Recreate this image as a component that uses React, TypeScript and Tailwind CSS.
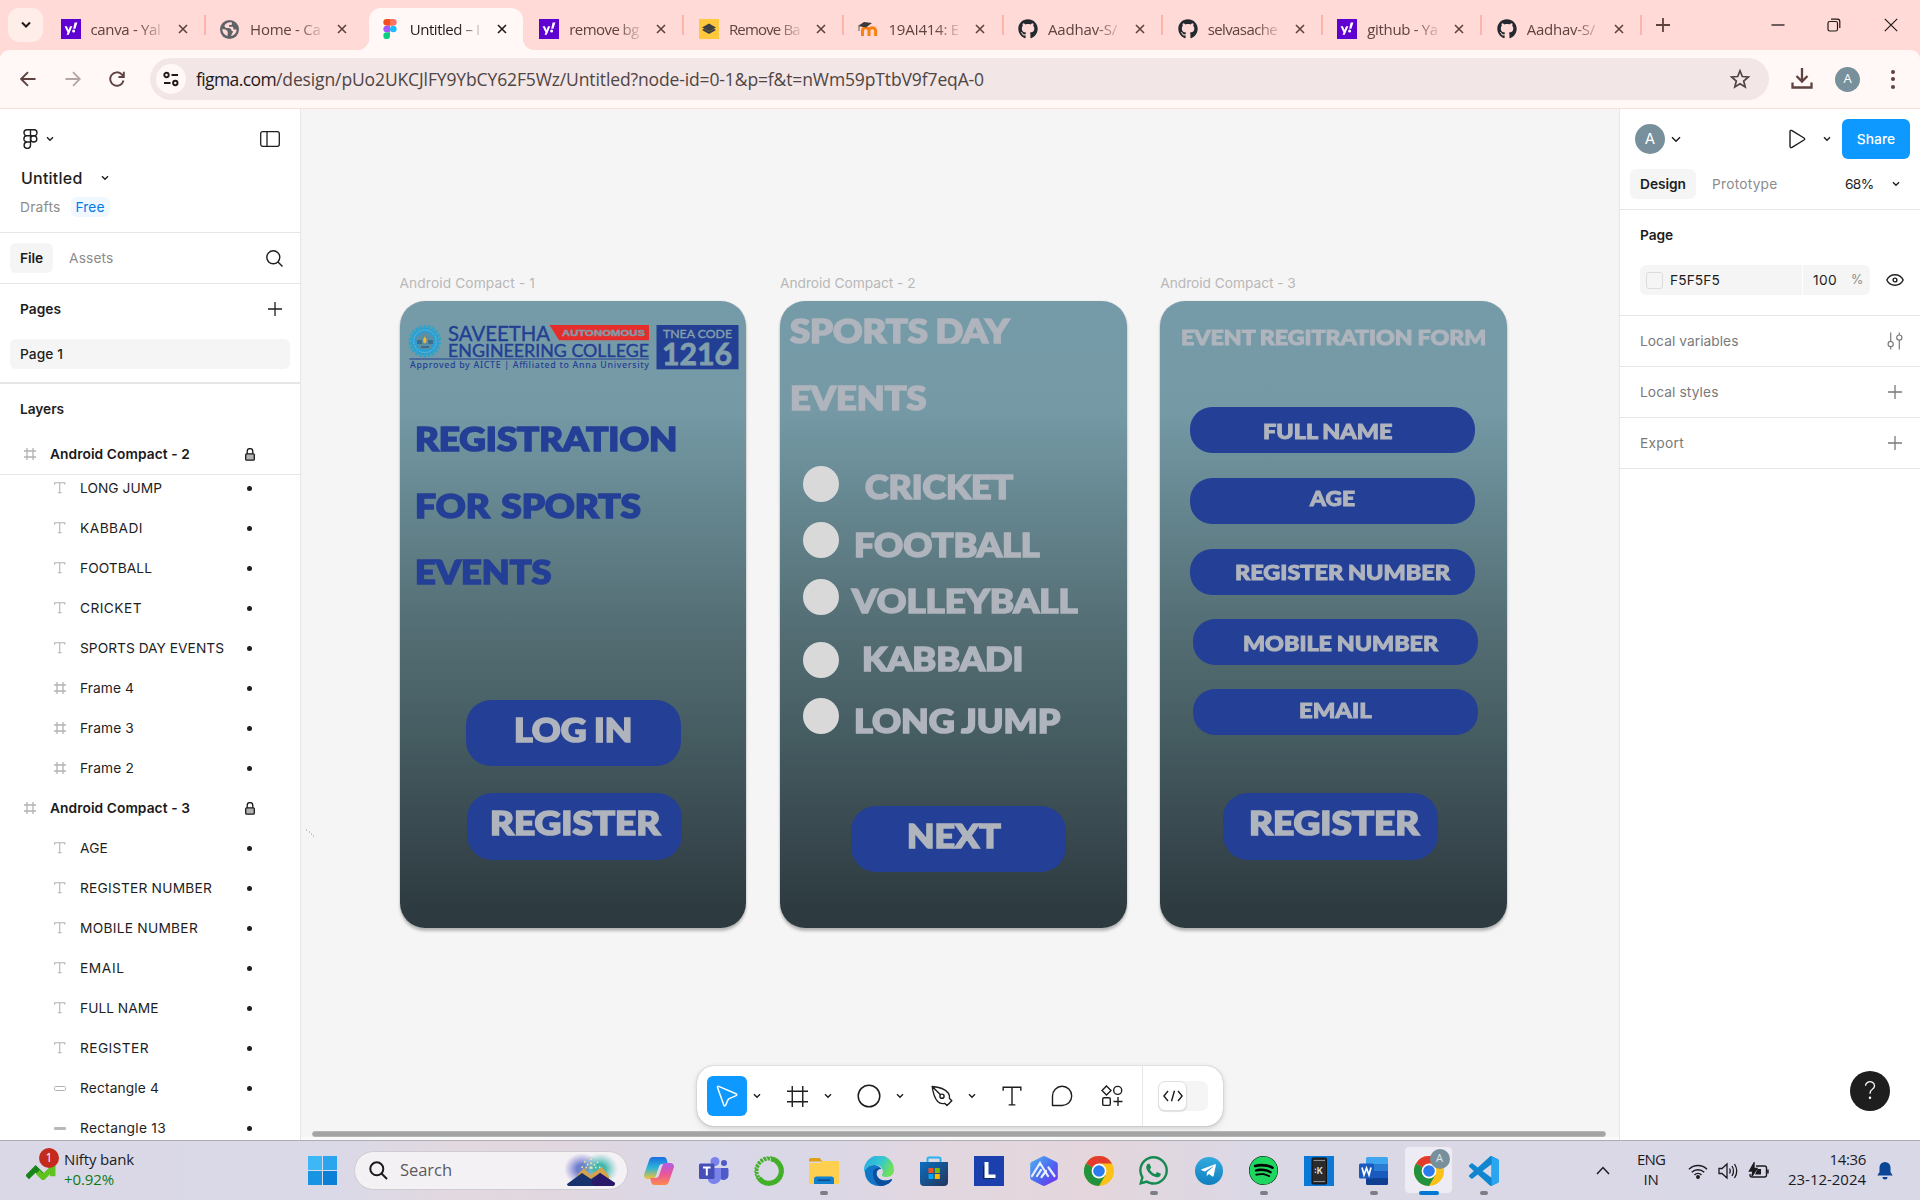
import React, { useLayoutEffect, useRef, useState } from "react";
import { FaGithub, FaSpotify, FaTelegramPlane, FaWhatsapp } from "react-icons/fa";

/* Text that is stretched or tightened to an exact width. */
function Fit({ w, mode = "space", children }: { w: number; mode?: "space" | "scale"; children: string }) {
  const ref = useRef<HTMLSpanElement>(null);
  const [style, setStyle] = useState<React.CSSProperties>({});
  useLayoutEffect(() => {
    const natural = ref.current!.getBoundingClientRect().width;
    if (!natural) return;
    if (mode === "scale") setStyle({ transform: `scaleX(${w / natural})` });
    else setStyle({ letterSpacing: `${(w - natural) / children.length}px` });
  }, [w, mode, children]);
  return (
    <span ref={ref} className="inline-block origin-left whitespace-pre" style={style}>
      {children}
    </span>
  );
}

type IconProps = { w: number; h?: number; sw?: number; className?: string; box?: string; children: React.ReactNode };
const Ic = ({ w, h = w, sw = 1.3, className = "", box, children }: IconProps) => (
  <svg width={w} height={h} viewBox={box ?? `0 0 ${w} ${h}`} fill="none" stroke="currentColor" strokeWidth={sw} className={`shrink-0 ${className}`}>
    {children}
  </svg>
);

const Chev = ({ className = "" }: { className?: string }) => (
  <Ic w={8} h={6} sw={1.4} className={className}>
    <path d="M1 1.2 4 4.2 7 1.2" />
  </Ic>
);
const Hash = ({ s = 12, sw = 1.3, className = "" }: { s?: number; sw?: number; className?: string }) => (
  <Ic w={s} sw={sw} box="0 0 12 12" className={className}>
    <path d="M3 0v12M9 0v12M0 3h12M0 9h12" />
  </Ic>
);
const TIcon = ({ s = 12, sw = 1.1, className = "" }: { s?: number; sw?: number; className?: string }) => (
  <Ic w={s} sw={sw} box="0 0 12 12" className={className}>
    <path d="M.7 2.8V.7h10.6v2.1M6 .7v10.6M4 11.3h4" />
  </Ic>
);
const Plus = ({ className = "" }: { className?: string }) => (
  <Ic w={14} sw={1.3} className={className}>
    <path d="M7 0v14M0 7h14" />
  </Ic>
);

/* ---------- browser chrome ---------- */

const Yahoo = () => (
  <svg width="20" height="20" viewBox="0 0 20 20">
    <rect width="20" height="20" fill="#5f01d1" />
    <path d="M3.6 7.3h2.3l1.6 3.6 1.5-3.6h2.3L7.8 15.8H5.5l1-2.3z" fill="#fff" />
    <path d="M13.6 3.6h2.8l-2 6.2h-2.2z" fill="#fff" />
    <circle cx="12.6" cy="12" r="1.5" fill="#fff" />
  </svg>
);
const Globe = () => (
  <svg width="19" height="19" viewBox="0 0 20 20">
    <circle cx="10" cy="10" r="10" fill="#5f6368" />
    <path d="M12.500 2.500c-3-.8-6 .5-7.500 2.800-.8 1.500.2 2.800 1.800 3 1.500.2 3-.2 4.200.7 1 .8.6 2 1.800 2.500 1 .4 1.200 1.300.3 2-.9.8-.6 2.300-1.600 3.300 3.500-.5 6-3.300 6-6.800h-2.300c-.9 0-1.200-.8-1.200-1.700s-.8-1.300-1.800-1.300H9.500V5.300h1.600c1 0 1.500-.5 1.500-1.300z" fill="#ffdad6" />
    <path d="M2.500 9.500c2 .2 4.500.5 5.500 2.500.5 1.300 0 2.500 0 4.800-3.300-.8-5.700-3.800-5.500-7.300z" fill="#ffdad6" />
  </svg>
);
const FigmaLogo = () => (
  <svg width="14" height="20" viewBox="0 0 12 18">
    <path d="M3 0h3v6H3a3 3 0 0 1 0-6z" fill="#f24e1e" />
    <path d="M6 0h3a3 3 0 0 1 0 6H6z" fill="#ff7262" />
    <path d="M3 6h3v6H3a3 3 0 0 1 0-6z" fill="#a259ff" />
    <circle cx="9" cy="9" r="3" fill="#1abcfe" />
    <path d="M3 12h3v3a3 3 0 1 1-3-3z" fill="#0acf83" />
  </svg>
);
const Layers = () => (
  <svg width="20" height="20" viewBox="0 0 20 20">
    <rect width="20" height="20" fill="#ffc83d" />
    <path d="M10 4.500l7 4-7 4-7-4z" fill="#3c4043" />
    <path d="M3 11l7 4 7-4-2.200-1.200L10 12.500 5.200 9.800z" fill="#3c4043" />
  </svg>
);
const Moodle = () => (
  <svg width="20" height="20" viewBox="0 0 20 20">
    <path d="M4.500 17V11.500a3.300 3.300 0 0 1 6.500 0V17M11 12a3.300 3.300 0 0 1 6.600 0v5" fill="none" stroke="#f98012" strokeWidth="3" />
    <path d="M0 7l6-4 8 1-6 4.500z" fill="#3b3b3b" />
    <path d="M1 7v5" stroke="#3b3b3b" strokeWidth="0.800" />
  </svg>
);
const Git = () => <FaGithub size={20} color="#24292f" />;

const tabs = [
  { icon: <Yahoo />, title: "canva - Yal", w: 70 },
  { icon: <Globe />, title: "Home - Ca", w: 70.500 },
  { icon: <FigmaLogo />, title: "Untitled – I", w: 70, active: true },
  { icon: <Yahoo />, title: "remove bg", w: 69.500 },
  { icon: <Layers />, title: "Remove Ba", w: 71 },
  { icon: <Moodle />, title: "19AI414: E", w: 70.500 },
  { icon: <Git />, title: "Aadhav-S/", w: 69 },
  { icon: <Git />, title: "selvasache", w: 69.500 },
  { icon: <Yahoo />, title: "github - Ya", w: 70.500 },
  { icon: <Git />, title: "Aadhav-S/", w: 68 },
];

function Tab({ icon, title, w, active, sep }: { icon: React.ReactNode; title: string; w: number; active?: boolean; sep: boolean }) {
  return (
    <div className={`relative flex h-[42px] w-[159.6px] items-center ${active ? "" : "text-[#5d423f]"}`}>
      {active && (
        <div className="absolute inset-y-0 left-[3px] right-[3px] rounded-t-[12px] bg-[#fff8f7]">
          <div className="absolute bottom-0 -left-3 size-3 bg-[radial-gradient(circle_at_0_0,transparent_12px,#fff8f7_12.5px)]" />
          <div className="absolute bottom-0 -right-3 size-3 bg-[radial-gradient(circle_at_100%_0,transparent_12px,#fff8f7_12.5px)]" />
        </div>
      )}
      <div className="relative flex w-full items-center pl-[13.500px]">
        <span className={`flex w-5 ${active ? "justify-center" : ""}`}>{icon}</span>
        <span className="ml-[10px] w-[72px] text-[15px] leading-5 [mask-image:linear-gradient(to_right,black_66%,transparent_105%)]">
          <Fit w={w}>{title}</Fit>
        </span>
        <Ic w={10} sw={1.6} className="ml-[15px]">
          <path d="M1 1 9 9M9 1 1 9" />
        </Ic>
      </div>
      {sep && <div className="absolute right-px top-[7px] h-5 w-[2px] bg-[#ffb4ab]" />}
    </div>
  );
}

function Browser() {
  return (
    <header className="h-[108px] shrink-0 bg-[#ffdad6] font-['Open_Sans','Noto_Sans',sans-serif]">
      <div className="flex h-[50px] items-start pt-2 pl-2 text-[#1f1a19]">
        <div className="flex h-[34px] w-[35px] items-center justify-center rounded-[11px] bg-[#ffedea]">
          <Ic w={10} h={8} sw={2}>
            <path d="M1 1.500 5 5.500 9 1.500" />
          </Ic>
        </div>
        <div className="ml-[4px] flex">
          {tabs.map((t, i) => (
            <Tab key={i} {...t} sep={i !== 1 && i !== 2} />
          ))}
        </div>
        <Ic w={14} sw={1.800} className="mt-[10px] ml-[13px] text-[#5d423f]">
          <path d="M7 0v14M0 7h14" />
        </Ic>
        <Ic w={14} sw={1.300} className="mt-[10px] ml-[101px]">
          <path d="M0.500 7h13" />
        </Ic>
        <Ic w={14} sw={1.200} className="mt-[10px] ml-[42px]">
          <rect x="1" y="3.500" width="9.500" height="9.500" rx="1.800" />
          <path d="M4 1.200h6.500a2.300 2.300 0 0 1 2.300 2.300V10" />
        </Ic>
        <Ic w={14} sw={1.200} className="mt-[10px] ml-[43px]">
          <path d="M.8.8 13.200 13.200M13.200.8.8 13.200" />
        </Ic>
      </div>
      <div className="flex h-[58px] items-center rounded-t-[9px] bg-[#fff8f7] pl-5 text-[#5d423f]">
        <Ic w={16} sw={1.900}>
          <path d="M15.500 8H1.500M8 1.200 1.200 8 8 14.800" />
        </Ic>
        <Ic w={16} sw={1.800} className="ml-[29px] text-[#b5a5a3]">
          <path d="M.5 8h14M8 1.200 14.800 8 8 14.800" />
        </Ic>
        <Ic w={16} sw={1.900} className="ml-[28px]">
          <path d="M14.500 9.500A6.700 6.700 0 1 1 13 3.600L14.500 5.500M14.800.8V6H9.500" />
        </Ic>
        <div className="ml-[25px] flex h-[42px] w-[1619px] items-center rounded-full bg-[#f2e6e7] pl-[6px] pr-[19px] text-[#4f4543]">
          <div className="flex size-[30px] items-center justify-center rounded-full bg-[#fff8f7] text-[#1f1a19]">
            <Ic w={16} sw={1.900}>
              <circle cx="3.500" cy="4" r="2.200" />
              <path d="M8.500 4H15M1 12h6.500" />
              <circle cx="12.300" cy="12" r="2.200" />
            </Ic>
          </div>
          <div className="ml-[10px] flex text-[17.500px] leading-6">
            <span className="text-[#1f1a19]">
              <Fit w={80}>figma.com</Fit>
            </span>
            <Fit w={708}>/design/pUo2UKCJlFY9YbCY62F5Wz/Untitled?node-id=0-1&p=f&t=nWm59pTtbV9f7eqA-0</Fit>
          </div>
          <Ic w={20} sw={1.700} className="ml-auto">
            <path d="M10 1.800 12.300 7.500 18.400 8 13.700 12 15.200 18 10 14.700 4.800 18 6.300 12 1.600 8 7.700 7.500Z" />
          </Ic>
        </div>
        <Ic w={22} sw={2.300} className="ml-[22px]">
          <path d="M11 0v13M5.500 8 11 13.500 16.500 8M1.500 14.500v5h19v-5" />
        </Ic>
        <div className="ml-[22px] flex size-[25px] items-center justify-center rounded-full bg-[#78909c] text-[13px] text-white">A</div>
        <div className="ml-[31px] flex flex-col gap-[3.500px]">
          <i className="size-1 rounded-full bg-current" />
          <i className="size-1 rounded-full bg-current" />
          <i className="size-1 rounded-full bg-current" />
        </div>
      </div>
    </header>
  );
}

/* ---------- left panel ---------- */

type Layer = { kind: "T" | "F" | "R" | "L"; name: string; w: number };
const board2: Layer[] = [
  { kind: "T", name: "LONG JUMP", w: 82 },
  { kind: "T", name: "KABBADI", w: 63 },
  { kind: "T", name: "FOOTBALL", w: 72 },
  { kind: "T", name: "CRICKET", w: 62 },
  { kind: "T", name: "SPORTS DAY EVENTS", w: 144 },
  { kind: "F", name: "Frame 4", w: 54 },
  { kind: "F", name: "Frame 3", w: 54 },
  { kind: "F", name: "Frame 2", w: 54 },
];
const board3: Layer[] = [
  { kind: "T", name: "AGE", w: 28 },
  { kind: "T", name: "REGISTER NUMBER", w: 132 },
  { kind: "T", name: "MOBILE NUMBER", w: 118 },
  { kind: "T", name: "EMAIL", w: 44.500 },
  { kind: "T", name: "FULL NAME", w: 78.500 },
  { kind: "T", name: "REGISTER", w: 69 },
  { kind: "R", name: "Rectangle 4", w: 79 },
  { kind: "L", name: "Rectangle 13", w: 86 },
];

function LayerRow({ kind, name, w }: Layer) {
  return (
    <div className="flex h-10 shrink-0 items-center pl-[54px]">
      <span className="flex w-[26px] text-[#b3b3b3]">
        {kind === "T" && <TIcon s={11.500} />}
        {kind === "F" && <Hash />}
        {kind === "R" && <i className="mt-px h-[5px] w-3 rounded-[1.500px] border border-[#b3b3b3]" />}
        {kind === "L" && <i className="mt-px h-[3px] w-3 rounded-[1px] bg-[#b9b9b9]" />}
      </span>
      <span className="w-[167px]">
        <Fit w={w}>{name}</Fit>
      </span>
      <i className="size-[5px] rounded-full bg-[#1e1e1e]" />
    </div>
  );
}

const BoardRow = ({ name }: { name: string }) => (
  <div className="flex h-10 shrink-0 items-center pl-6 font-semibold text-[#1a1a1a]">
    <Hash className="text-[#b3b3b3]" />
    <span className="ml-[14px] w-[195px]">
      <Fit w={140}>{name}</Fit>
    </span>
    <Ic w={10} h={13} sw={1.300}>
      <path d="M2.200 6V3.400a2.800 2.800 0 0 1 5.600 0V6" />
      <rect x=".7" y="5.800" width="8.600" height="6.400" rx="1" fill="#b3b3b3" />
    </Ic>
  </div>
);

function LeftPanel() {
  return (
    <aside className="flex w-[301px] shrink-0 flex-col overflow-hidden border-r border-[#e6e6e6] bg-white text-[13.750px] text-[#1e1e1e]">
      <div className="flex h-[124px] shrink-0 flex-col border-b border-[#e6e6e6]">
        <div className="mt-[19px] flex h-[22px] items-center pl-[23px]">
          <Ic w={15} h={20.500} sw={1.400} box="0 0 15 20.500">
            <path d="M7.500.8H4a3 3 0 0 0 0 6h3.500zM7.500.8H11a3 3 0 0 1 0 6H7.500zM7.500 6.800H4a3 3 0 0 0 0 6.200h3.500zM7.500 13H4.200a3.200 3.200 0 1 0 3.300 3.300z" />
            <circle cx="10.700" cy="9.900" r="3.100" />
          </Ic>
          <Chev className="ml-2" />
          <Ic w={20} h={16} sw={1.300} className="ml-[206px]">
            <rect x=".7" y=".7" width="18.600" height="14.600" rx="2" />
            <path d="M7 .7v14.600" />
          </Ic>
        </div>
        <div className="mt-[17px] flex h-[22px] items-center pl-[21px] text-[16px] font-medium">
          <Fit w={61.500}>Untitled</Fit>
          <Chev className="ml-[18px]" />
        </div>
        <div className="mt-[8px] flex items-center pl-5 text-[#8c8c8c]">
          <Fit w={40.500}>Drafts</Fit>
          <span className="ml-[10px] flex h-5 items-center rounded-[6px] bg-[#f0f8ff] px-[5px] text-[#007be5]">
            <Fit w={29}>Free</Fit>
          </span>
        </div>
      </div>
      <div className="flex h-[51px] shrink-0 items-center border-b border-[#e6e6e6] pl-[10px]">
        <span className="flex h-[30px] w-[43px] items-center justify-center rounded-[6px] bg-[#f5f5f5] font-semibold">
          <Fit w={23}>File</Fit>
        </span>
        <span className="ml-4 w-[180px] text-[#8c8c8c]">
          <Fit w={44.500}>Assets</Fit>
        </span>
        <Ic w={17} sw={1.400} className="ml-[17px]">
          <circle cx="7.300" cy="7.300" r="6.500" />
          <path d="m12 12 4.500 4.500" />
        </Ic>
      </div>
      <div className="flex h-[100px] shrink-0 flex-col border-b-2 border-[#e6e6e6] px-[10px] font-semibold">
        <div className="mt-[15px] flex h-5 items-center pl-[10px]">
          <span className="w-[247.500px]">
            <Fit w={41}>Pages</Fit>
          </span>
          <Plus />
        </div>
        <div className="mt-5 flex h-[30px] w-[280px] shrink-0 items-center rounded-[6px] bg-[#f5f5f5] pl-[10px] font-medium">
          <Fit w={43}>Page 1</Fit>
        </div>
      </div>
      <div className="mt-[15px] flex h-5 shrink-0 items-center pl-5 font-semibold">
        <Fit w={44}>Layers</Fit>
      </div>
      <div className="mt-[15px] border-b border-[#e6e6e6]">
        <BoardRow name="Android Compact - 2" />
      </div>
      <div className="-mt-[7px] flex flex-col">
        {board2.map((l) => (
          <LayerRow key={l.name} {...l} />
        ))}
        <BoardRow name="Android Compact - 3" />
        {board3.map((l) => (
          <LayerRow key={l.name} {...l} />
        ))}
      </div>
    </aside>
  );
}

/* ---------- canvas ---------- */

type Box = { x: number; y: number; w: number; h: number; r: number };
type Label = { t: string; x: number; y: number; w: number; small?: boolean; blue?: boolean };
type Board = { name: string; x: number; boxes: Box[]; circles: number[]; labels: Label[] };

/* Coordinates are relative to the top-left corner of each board; a label's x, y and w describe its inked capitals. */
const boards: Board[] = [
  {
    name: "Android Compact - 1",
    x: 98.500,
    boxes: [
      { x: 66.300, y: 398.500, w: 215, h: 66, r: 25 },
      { x: 67.300, y: 492.200, w: 215, h: 66.300, r: 25 },
    ],
    circles: [],
    labels: [
      { t: "REGISTRATION", x: 17, y: 126, w: 259, blue: true },
      { t: "FOR  SPORTS", x: 17, y: 192.500, w: 223.500, blue: true },
      { t: "EVENTS", x: 17, y: 258.500, w: 134, blue: true },
      { t: "LOG IN", x: 115.800, y: 417, w: 115 },
      { t: "REGISTER", x: 91.800, y: 509.700, w: 168.500 },
    ],
  },
  {
    name: "Android Compact - 2",
    x: 479,
    boxes: [{ x: 71, y: 504.700, w: 214.700, h: 66, r: 25 }],
    circles: [164.800, 221, 278.100, 341, 397],
    labels: [
      { t: "SPORTS DAY", x: 10.700, y: 18, w: 218.500 },
      { t: "EVENTS", x: 11.300, y: 84.500, w: 134 },
      { t: "CRICKET", x: 86, y: 174, w: 147.300 },
      { t: "FOOTBALL", x: 75.300, y: 231.300, w: 184 },
      { t: "VOLLEYBALL", x: 72, y: 287.700, w: 225.500 },
      { t: "KABBADI", x: 84, y: 345.700, w: 158 },
      { t: "LONG JUMP", x: 75.300, y: 408, w: 204.500 },
      { t: "NEXT", x: 128.700, y: 522.700, w: 92 },
    ],
  },
  {
    name: "Android Compact - 3",
    x: 859.300,
    boxes: [
      { x: 29.700, y: 106, w: 285, h: 46, r: 22 },
      { x: 29.700, y: 176.900, w: 285, h: 46, r: 22 },
      { x: 29.700, y: 247.300, w: 285, h: 46, r: 22 },
      { x: 32.300, y: 318, w: 285, h: 46, r: 22 },
      { x: 32.300, y: 387.400, w: 285, h: 46, r: 22 },
      { x: 63, y: 492, w: 214.700, h: 66.300, r: 25 },
    ],
    circles: [],
    labels: [
      { t: "EVENT REGITRATION FORM", x: 21.600, y: 27.800, w: 303, small: true },
      { t: "FULL NAME", x: 103.600, y: 122.200, w: 128, small: true },
      { t: "AGE", x: 149.700, y: 189, w: 44.500, small: true },
      { t: "REGISTER NUMBER", x: 75.300, y: 263, w: 214, small: true },
      { t: "MOBILE NUMBER", x: 84, y: 334.200, w: 194, small: true },
      { t: "EMAIL", x: 139.300, y: 400.600, w: 71.500, small: true },
      { t: "REGISTER", x: 90.700, y: 509.700, w: 168.500 },
    ],
  },
];

/* Side bearings of the display face, in em. */
const leftBearing = (t: string) => (/^[VA]/.test(t) ? 0 : /^[CSG]/.test(t) ? 0.02 : 0.05);
const rightBearing = (t: string) => (/[NIMD]$/.test(t) ? 0.055 : /[ES]$/.test(t) ? 0.02 : 0);

const teeth = Array.from({ length: 22 }, (_, i) => i * (360 / 22));

const CollegeLogo = () => (
  <svg width="331" height="46" viewBox="0 0 331 46" className="absolute left-[8px] top-[22.500px]">
    {teeth.map((a) => (
      <rect key={a} x="15.400" y="1" width="3" height="4" fill="#2fa3c9" transform={`rotate(${a} 16.900 17.300)`} />
    ))}
    <circle cx="16.900" cy="17.300" r="13.400" fill="#2a9fd6" />
    <circle cx="16.900" cy="17.300" r="11.300" fill="none" stroke="#7fc0c8" strokeWidth="1" strokeDasharray="1.500 1" />
    <path d="M7.500 14 16.900 7l9.400 7-3.500 11H11z" fill="#5b8fa3" />
    <path d="M9 16h5v4H9zM20 16h5v4h-5zM13 22h8v2h-8z" fill="#3d6c8e" />
    <path d="M16.900 12.500c2.500 3 1.900 6.500 0 6.800-2-.3-2.600-3.800 0-6.800z" fill="#f2b632" />
    <g fill="#223f93" fontFamily="Lato, sans-serif" fontWeight="400">
      <text x="40" y="16.900" fontSize="21.500" textLength="102" lengthAdjust="spacingAndGlyphs" stroke="#223f93" strokeWidth="0.400">SAVEETHA</text>
      <text x="40" y="32.500" fontSize="17.600" textLength="201" lengthAdjust="spacingAndGlyphs" stroke="#223f93" strokeWidth="0.400">ENGINEERING COLLEGE</text>
      <rect x="1.500" y="34.500" width="239.500" height="1" />
    </g>
    <text x="2" y="44" fontSize="8.800" fontFamily="'Noto Sans', sans-serif" fontWeight="500" fill="#223f93" textLength="239" lengthAdjust="spacing">Approved by AICTE | Affiliated to Anna University</text>
    <path d="M141.500 1H241v15.300h-90z" fill="#e52e2c" />
    <text x="154" y="12" fontSize="9.800" fontFamily="'Liberation Sans', sans-serif" fontWeight="700" fill="#839aa6" stroke="#839aa6" strokeWidth="0.500" textLength="83" lengthAdjust="spacingAndGlyphs">AUTONOMOUS</text>
    <rect x="248.500" y="1" width="82" height="44.300" fill="#223f93" />
    <g fill="#829fac" fontFamily="Lato, sans-serif">
      <text x="255" y="13.600" fontSize="11.300" fontWeight="400" textLength="69" lengthAdjust="spacingAndGlyphs" stroke="#829fac" strokeWidth="0.400">TNEA CODE</text>
      <text x="254" y="40.600" fontSize="31" fontWeight="700" stroke="#829fac" strokeWidth="0.900" textLength="70" lengthAdjust="spacingAndGlyphs">1216</text>
    </g>
  </svg>
);

function BoardLabel({ label: l }: { label: Label }) {
  const size = l.small ? 21 : 33;
  const left = leftBearing(l.t) * size;
  const right = rightBearing(l.t) * size;
  return (
    <div
      className={`absolute leading-none ${l.small ? "text-[21px] [-webkit-text-stroke:1px_currentColor]" : "text-[33px] [-webkit-text-stroke:1.700px_currentColor]"} ${l.blue ? "text-[#243f96] [word-spacing:-0.08em]" : "text-[#afb4bd] [word-spacing:-0.03em]"}`}
      style={{ left: l.x - left, top: l.y - size * 0.15 }}
    >
      <Fit w={l.w + left + right} mode="scale">
        {l.t}
      </Fit>
    </div>
  );
}

function Artboard({ board }: { board: Board }) {
  return (
    <div className="absolute top-[166px] w-[347px]" style={{ left: board.x }}>
      <div className="h-[26.300px] text-[13.750px] leading-[17px] text-[#b8b8b8]">
        <Fit w={135.500}>{board.name}</Fit>
      </div>
      <div className="relative h-[627px] w-[346.500px] rounded-[25px] bg-[linear-gradient(180deg,#769ba8_0%,#759aa6_17%,#65868f_33%,#567077_50%,#475f64_67%,#3a4b51_83%,#2d3b40_97%)] shadow-[0_3px_3px_rgba(0,0,0,0.25),0_0_1px_rgba(0,0,0,0.3)] font-['Lato',sans-serif] font-black">
        {board.name.endsWith("1") && <CollegeLogo />}
        {board.boxes.map((b, i) => (
          <div key={i} className="absolute bg-[#243f96]" style={{ left: b.x, top: b.y, width: b.w, height: b.h, borderRadius: b.r }} />
        ))}
        {board.circles.map((y) => (
          <div key={y} className="absolute left-[23.200px] size-[35.500px] rounded-full bg-[#d9d9d9]" style={{ top: y }} />
        ))}
        {board.labels.map((l) => (
          <BoardLabel key={l.t} label={l} />
        ))}
      </div>
    </div>
  );
}

function Toolbar() {
  return (
    <div className="absolute left-[396px] top-[957px] flex h-[60px] w-[526px] items-center rounded-[17px] bg-white pl-[10px] text-[#1e1e1e] shadow-[0_0_1px_rgba(0,0,0,0.3),0_1px_4px_rgba(0,0,0,0.15),0_3px_8px_rgba(0,0,0,0.08)]">
      <div className="flex size-10 items-center justify-center rounded-[6px] bg-[#0d99ff] text-white">
        <Ic w={22} sw={1.500}>
          <path d="M1.500 2.600 7.900 20.200c.4 1 1.400.9 1.800 0l2.200-5.300c.3-.6.700-1 1.300-1.300l6.900-3c.9-.5.8-1.500-.1-1.800L2.700 1.400c-.8-.2-1.400.400-1.200 1.200z" strokeLinejoin="round" />
        </Ic>
      </div>
      <Chev className="ml-[6px]" />
      <Hash s={21} sw={0.800} className="ml-[26px]" />
      <Chev className="ml-[16px]" />
      <Ic w={24} sw={1.500} className="ml-[25px]">
        <circle cx="12" cy="12" r="10.800" />
      </Ic>
      <Chev className="ml-[15px]" />
      <Ic w={22} sw={1.400} className="ml-[27px]">
        <path d="M1.200 1.500C8 2 14 4 17.200 8c1.500 2 1.500 4 1.300 5.500l2.300 2.200-4.800 4.800-2.300-2.200c-2.500.7-5 .2-7-1.800C3.500 13 2 8 1.200 1.500zL9.500 9.800" strokeLinejoin="round" />
        <circle cx="11" cy="11.200" r="2.100" />
      </Ic>
      <Chev className="ml-[15px]" />
      <TIcon s={20} sw={0.850} className="ml-[26px]" />
      <Ic w={22} sw={1.400} className="ml-[29px]">
        <path d="M1.500 20.500V11A9.600 9.600 0 1 1 11 20.500z" strokeLinejoin="round" />
      </Ic>
      <Ic w={22} sw={1.400} className="ml-[28px]">
        <path d="M5.500 .9 10 5.400 5.500 9.900 1 5.400zM17 12v9M12.500 16.500h9" />
        <circle cx="16.700" cy="5.400" r="4" />
        <rect x="1.700" y="12.800" width="7.600" height="7.600" rx="1.500" />
      </Ic>
      <div className="ml-[19px] h-[60px] w-px bg-[#e6e6e6]" />
      <div className="ml-[15px] flex h-[30px] w-[50px] items-center rounded-[7px] bg-[#f5f5f5]">
        <div className="flex h-[30px] w-[29px] items-center justify-center rounded-[7px] border border-[#e0e0e0] bg-white shadow-[0_1px_1px_rgba(0,0,0,0.12)]">
          <Ic w={20} h={12} sw={1.400}>
            <path d="M5 1 .9 6 5 11M15 1l4.100 5L15 11M11.500.8 8.500 11.200" />
          </Ic>
        </div>
      </div>
    </div>
  );
}

const Canvas = () => (
  <main className="relative flex-1 overflow-hidden bg-[#f5f5f5]">
    {boards.map((b) => (
      <Artboard key={b.name} board={b} />
    ))}
    <svg width="10" height="8" className="absolute left-[4px] top-[720px]">
      <path d="M1 1h1M4 3h1M6 5h1M8 7h1" stroke="#999" />
    </svg>
    <Toolbar />
    <div className="absolute bottom-0 left-0 right-0 h-[3px] bg-[#fafafa]" />
    <div className="absolute bottom-[3px] left-[11px] right-[13px] h-[6px] rounded-full border border-[#b5b5b5] bg-[#a3a3a3]" />
  </main>
);

/* ---------- right panel ---------- */

const Section = ({ title, w, children }: { title: string; w: number; children: React.ReactNode }) => (
  <div className="flex h-[51px] shrink-0 items-center justify-between border-b border-[#e6e6e6] pl-5 pr-[17px] text-[#7a7a7a]">
    <Fit w={w}>{title}</Fit>
    {children}
  </div>
);

function RightPanel() {
  return (
    <aside className="flex w-[301px] shrink-0 flex-col border-l border-[#e6e6e6] bg-white text-[13.750px] text-[#1e1e1e]">
      <div className="flex h-[101px] shrink-0 flex-col border-b border-[#e6e6e6]">
        <div className="mt-[10px] flex h-10 items-center pl-[15px]">
          <div className="flex size-[30px] items-center justify-center rounded-full bg-[#78909c] text-[15px] text-white">A</div>
          <Ic w={10} h={7} sw={1.500} className="ml-[6px]">
            <path d="M1 1.200 5 5.200 9 1.200" />
          </Ic>
          <Ic w={17} h={20} sw={1.400} className="ml-[108px]">
            <path d="M1 2.700v14.600c0 1.200 1 1.700 2 1.100L15 11c.9-.6.9-1.400 0-2L3 1.600C2 1 1 1.500 1 2.700z" />
          </Ic>
          <Chev className="ml-[17px]" />
          <div className="ml-[11px] flex h-10 w-[68px] items-center justify-center rounded-[6px] bg-[#0d99ff] font-medium text-white">
            <Fit w={38.500}>Share</Fit>
          </div>
        </div>
        <div className="mt-[10px] flex h-[30px] items-center pl-[10px]">
          <div className="flex h-[30px] w-[66px] items-center justify-center rounded-[6px] bg-[#f5f5f5] font-semibold">
            <Fit w={46}>Design</Fit>
          </div>
          <span className="ml-4 w-[133px] text-[#8c8c8c]">
            <Fit w={65.500}>Prototype</Fit>
          </span>
          <span className="w-[47px]">
            <Fit w={28.500}>68%</Fit>
          </span>
          <Chev />
        </div>
      </div>
      <div className="flex h-[106px] shrink-0 flex-col border-b border-[#e6e6e6] pl-5">
        <div className="mt-[15px] h-5 font-semibold leading-5">
          <Fit w={33}>Page</Fit>
        </div>
        <div className="mt-5 flex h-[30px] items-center">
          <div className="flex h-[30px] w-[162px] items-center rounded-l-[6px] bg-[#f5f5f5] pl-[6px]">
            <i className="size-[17px] rounded-[3px] border border-[#dcdcdc]" />
            <span className="ml-[7px]">
              <Fit w={50}>F5F5F5</Fit>
            </span>
          </div>
          <div className="ml-px flex h-[30px] w-[67px] items-center rounded-r-[6px] bg-[#f5f5f5] pl-[10px]">
            <span className="w-[38px]">
              <Fit w={24}>100</Fit>
            </span>
            <span className="text-[12.500px] text-[#8c8c8c]">%</span>
          </div>
          <Ic w={18} h={12} sw={1.400} className="ml-4">
            <path d="M.8 6C2.500 2.500 5.500.8 9 .8S15.500 2.500 17.200 6C15.500 9.500 12.500 11.200 9 11.200S2.500 9.500.8 6z" />
            <circle cx="9" cy="6" r="1.900" />
          </Ic>
        </div>
      </div>
      <Section title="Local variables" w={98.500}>
        <Ic w={16} h={18} sw={1.200}>
          <path d="M3.700.5v8.800M3.700 14.500v3M12.300.5V3M12.300 8.200v9.300" />
          <circle cx="3.700" cy="12" r="2.600" />
          <circle cx="12.300" cy="5.600" r="2.600" />
        </Ic>
      </Section>
      <Section title="Local styles" w={78.500}>
        <Plus className="mr-px" />
      </Section>
      <Section title="Export" w={44}>
        <Plus className="mr-px" />
      </Section>
      <div className="mt-auto mb-[29.500px] ml-[230px] flex size-10 items-center justify-center rounded-full bg-[#1e1e1e] text-white">
        <Ic w={12} h={19} sw={1.300}>
          <path d="M1.500 4.800A4.500 4 0 1 1 8.600 8C6.700 9.300 6 10 6 12.800" />
          <circle cx="6" cy="16.800" r=".6" fill="currentColor" />
        </Ic>
      </div>
    </aside>
  );
}

/* ---------- taskbar ---------- */

const Svg = ({ children }: { children: React.ReactNode }) => (
  <svg width="30" height="30" viewBox="0 0 30 30">
    {children}
  </svg>
);

const ChromeIcon = () => (
  <Svg>
    <circle cx="15" cy="15" r="15" fill="#fbc116" />
    <path d="M15 15 2 7.500A15 15 0 0 1 28 7.500H15z" fill="#e33b2e" />
    <path d="M2 7.500A15 15 0 0 0 15 30l6.500-11.200L15 15z" fill="#23923f" />
    <circle cx="15" cy="15" r="7.400" fill="#fff" />
    <circle cx="15" cy="15" r="5.800" fill="#2a7af0" />
  </Svg>
);

const apps: { el: React.ReactNode; dot?: boolean; active?: boolean }[] = [
  {
    el: (
      <Svg>
        <defs>
          <linearGradient id="cp1" x1="0" y1="0" x2="0" y2="1">
            <stop offset="0" stopColor="#1a6fe0" />
            <stop offset=".5" stopColor="#2fb4d8" />
            <stop offset="1" stopColor="#f4c430" />
          </linearGradient>
          <linearGradient id="cp2" x1="0" y1="0" x2="0" y2="1">
            <stop offset="0" stopColor="#b45be8" />
            <stop offset=".5" stopColor="#e8559a" />
            <stop offset="1" stopColor="#ff8a4c" />
          </linearGradient>
        </defs>
        <path d="M9 1h10.500c2 0 2.800 1 3.400 3l1 4h-5.500c-2 0-3 1-3.600 3l-3 9c-.6 2-1.500 3-3.600 3H4c-3.500 0-4.500-2.500-3.700-5L5 4.500C5.700 2 7 1 9 1z" fill="url(#cp1)" />
        <path d="M21 29H10.500c-2 0-2.800-1-3.400-3l-1-4h5.500c2 0 3-1 3.600-3l3-9c.6-2 1.500-3 3.600-3H26c3.500 0 4.500 2.500 3.700 5L25 25.500c-.7 2.500-2 3.500-4 3.500z" fill="url(#cp2)" />
      </Svg>
    ),
  },
  {
    el: (
      <Svg>
        <circle cx="25" cy="7" r="3" fill="#5059c9" />
        <circle cx="16" cy="5.500" r="4.500" fill="#7b83eb" />
        <path d="M19 12h9c1 0 1.500.6 1.500 1.500V19a5 5 0 0 1-9 3z" fill="#5059c9" />
        <path d="M9 12h13v9.500a7 7 0 0 1-13 3z" fill="#7b83eb" />
        <rect x="0" y="7.500" width="15.500" height="15.500" rx="1.500" fill="#464eb8" />
        <path d="M4 11.500h7.600M7.800 11.500v8" stroke="#fff" strokeWidth="2" />
      </Svg>
    ),
  },
  {
    el: (
      <Svg>
        <circle cx="15" cy="15" r="12.300" fill="none" stroke="#43b02a" strokeWidth="5" strokeDasharray="48 100" transform="rotate(-80 15 15)" />
        <circle cx="15" cy="15" r="12.300" fill="none" stroke="#43b02a" strokeWidth="3.500" strokeDasharray="2.500 1" />
        <circle cx="15" cy="15" r="14" fill="none" stroke="#43b02a" strokeWidth="1.500" strokeDasharray="2 1.500" />
      </Svg>
    ),
  },
  {
    dot: true,
    el: (
      <Svg>
        <path d="M0 4c0-1 .6-2 1.600-2h9l3 3.500H0z" fill="#e0a013" />
        <path d="M0 7h11l2-2h15.500C29.500 5 30 5.600 30 6.500V28H0z" fill="#ffd04f" />
        <path d="M5 28v-5c0-1.500 1-2.500 2.500-2.500h15c1.500 0 2.500 1 2.500 2.500v5z" fill="#117fd0" />
        <rect x="8.500" y="23.500" width="13" height="1.500" rx=".7" fill="#0b4a86" />
      </Svg>
    ),
  },
  {
    el: (
      <Svg>
        <defs>
          <linearGradient id="ed1" x1="0" y1="0" x2="1" y2=".4">
            <stop offset="0" stopColor="#2aa8e6" />
            <stop offset=".6" stopColor="#35c8cf" />
            <stop offset="1" stopColor="#6fe05a" />
          </linearGradient>
        </defs>
        <path d="M1 14C4 8 14 7 17.500 13c-3-.5-5 1.500-5 4.500 0 5 6 8.500 12.500 6.500 1.500-.5 2.700-1.200 3.200-.6C26 27.500 20.500 30 15 30 7 30 0 23.500 1 14z" fill="#1076c8" />
        <path d="M9 17c0-3 2.500-5.500 6-5l2.500 1c-3-.5-5 1.500-5 4.500 0 5 6 8.500 12.500 6.500 1.500-.5 2.700-1.200 3.200-.6C26 27.500 21 30 16 30c-4-1.500-7-7-7-13z" fill="#0c4f9c" />
        <path d="M0 15A15 15 0 0 1 30 13.500c0 5-3.500 7.500-8 7.500-3.500 0-5-1.500-3.600-3.200C20 15 18 9.500 12 9 6 8.500 1.500 12 0 17z" fill="url(#ed1)" />
      </Svg>
    ),
  },
  {
    el: (
      <Svg>
        <defs>
          <linearGradient id="ms" x1="0" y1="0" x2="1" y2="1">
            <stop offset="0" stopColor="#0a6fc0" />
            <stop offset="1" stopColor="#24345c" />
          </linearGradient>
        </defs>
        <path d="M8.500 8V3a1.500 1.500 0 0 1 1.500-1.500h10A1.500 1.500 0 0 1 21.500 3v5" fill="none" stroke="#25b4f0" strokeWidth="2" />
        <path d="M1 6h28v20a4 4 0 0 1-4 4H5a4 4 0 0 1-4-4z" fill="url(#ms)" />
        <path d="M9.500 12h5v5h-5z" fill="#f25022" />
        <path d="M15.800 12h5v5h-5z" fill="#7fba00" />
        <path d="M9.500 18h5v5h-5z" fill="#00a4ef" />
        <path d="M15.800 18h5v5h-5z" fill="#ffb900" />
      </Svg>
    ),
  },
  {
    el: (
      <Svg>
        <rect width="30" height="30" fill="#1c3fae" />
        <path d="M9 23V10l4-4v14h9l-3 3z" fill="#0b2a52" />
        <path d="M10.500 6h4v12.500h7V22h-11z" fill="#fff" />
      </Svg>
    ),
  },
  {
    el: (
      <Svg>
        <defs>
          <linearGradient id="hx" x1="0" y1="0" x2="1" y2="1">
            <stop offset="0" stopColor="#4cb4f0" />
            <stop offset=".6" stopColor="#4f5ff0" />
            <stop offset="1" stopColor="#7a2df0" />
          </linearGradient>
        </defs>
        <path d="M13.500.5q1.500-.8 3 0l11 5.500q1.300.8 1.300 2.300v13.400q0 1.500-1.300 2.300l-11 5.500q-1.500.8-3 0l-11-5.500q-1.300-.8-1.300-2.300V8.300Q1.200 6.800 2.500 6z" fill="url(#hx)" />
        <path d="M3 20 11 7l8 13M8 20l4-6M19.500 11.500 25.500 20M17 15l-4.500 6" fill="none" stroke="#e8f0ff" strokeWidth="2.200" strokeLinecap="round" />
      </Svg>
    ),
  },
  { el: <ChromeIcon /> },
  { dot: true, el: <FaWhatsapp size={33} color="#168a50" /> },
  {
    el: (
      <div className="flex size-7 items-center justify-center rounded-full bg-[linear-gradient(#34aadf,#0f7fbf)]">
        <FaTelegramPlane size={17} color="#fff" />
      </div>
    ),
  },
  {
    dot: true,
    el: (
      <div className="rounded-full bg-black">
        <FaSpotify size={29} color="#1ed760" />
      </div>
    ),
  },
  {
    el: (
      <Svg>
        <rect width="30" height="30" fill="#0a78d7" />
        <rect x="8" y="2" width="14.500" height="26" rx="1" fill="#2b2b2b" stroke="#111" />
        <path d="M9.500 4.500h11.500M9.500 25.500h11.500" stroke="#8a8d92" />
        <text x="10" y="18" fontSize="8.500" fontWeight="700" fill="#ddd" fontFamily="Inter, sans-serif">:K</text>
      </Svg>
    ),
  },
  {
    dot: true,
    el: (
      <Svg>
        <path d="M7 2.500Q7 1 8.500 1h19Q29 1 29 2.500V8H7z" fill="#41a5ee" />
        <path d="M7 8h22v7H7z" fill="#2b7cd3" />
        <path d="M7 15h22v7H7z" fill="#185abd" />
        <path d="M7 22h22v5.500q0 1.500-1.500 1.500h-19Q7 29 7 27.500z" fill="#103f91" />
        <rect x="0" y="7.500" width="15" height="15" rx="1.500" fill="#185abd" />
        <path d="M3 11.500 5 19 7.500 12l2.500 7 2-7.500" fill="none" stroke="#fff" strokeWidth="1.700" />
      </Svg>
    ),
  },
  {
    active: true,
    el: (
      <div className="relative">
        <ChromeIcon />
        <span className="absolute -top-[7px] left-[16px] flex size-[20px] items-center justify-center rounded-full bg-[#78909c] text-[11px] text-[#dfe6e9]">A</span>
      </div>
    ),
  },
  {
    dot: true,
    el: (
      <svg width="30" height="30" viewBox="0 0 24 24">
        <path
          d="M23.150 2.587L18.210.21a1.494 1.494 0 0 0-1.705.29l-9.460 8.630-4.120-3.128a.999.999 0 0 0-1.276.057L.327 7.261A1 1 0 0 0 .326 8.740L3.899 12 .326 15.260a1 1 0 0 0 .001 1.479L1.650 17.940a.999.999 0 0 0 1.276.057l4.120-3.128 9.460 8.630a1.492 1.492 0 0 0 1.704.290l4.942-2.377A1.500 1.500 0 0 0 24 20.060V3.939a1.500 1.500 0 0 0-.850-1.352zm-5.146 14.861L10.826 12l7.178-5.448v10.896z"
          fill="#0f86cf"
        />
        <path d="M18.200.2 23.150 2.590A1.500 1.500 0 0 1 24 3.940V20.060a1.500 1.500 0 0 1-.85 1.350L18 23.800z" fill="#2aa5f0" />
      </svg>
    ),
  },
];

function Taskbar() {
  return (
    <footer className="flex h-[60px] shrink-0 items-center border-t border-[#aeacb5] bg-[linear-gradient(90deg,#dad8e7_0%,#dad9e8_17%,#e2d8df_24%,#e0d7e0_30%,#d9d8e8_37%,#dbd7e6_43%,#e3d7df_50%,#e4d6dc_57%,#dbd8e5_65%,#d9d8e7_100%)] font-['Open_Sans','Noto_Sans',sans-serif] text-[15px] text-[#1b1b1f]">
      <div className="flex w-[308px] items-center pb-1 pl-[26px]">
        <div className="relative mb-[12px] h-[34px] w-[38px]">
          <svg width="30" height="16" viewBox="0 0 28 14" className="absolute bottom-0 left-0">
            <path d="M1 12 9 4l6 6" fill="none" stroke="#168416" strokeWidth="5" />
            <path d="M11 7l5 5 9-9v8" fill="none" stroke="#5fc21e" strokeWidth="5" />
          </svg>
          <span className="absolute left-[13px] top-[2px] flex size-5 items-center justify-center rounded-full bg-[#c42b1c] text-[12px] text-white">1</span>
        </div>
        <div className="leading-5">
          <div>
            <Fit w={70}>Nifty bank</Fit>
          </div>
          <div className="text-[#0f7b0f]">
            <Fit w={50}>+0.92%</Fit>
          </div>
        </div>
      </div>
      <div className="grid size-[29px] grid-cols-2 gap-px">
        <i className="bg-[#3bb8f5]" />
        <i className="bg-[#2ba6ee]" />
        <i className="bg-[#1795e2]" />
        <i className="bg-[#0a7fd6]" />
      </div>
      <div className="ml-[17px] flex h-[39px] w-[274px] items-center rounded-full border border-[#cfcbd3] bg-[#f4f1f5] pl-[14px] pr-[9px] text-[16.500px] text-[#5c5a60]">
        <Ic w={19} sw={2} className="text-[#1b1b1f]">
          <circle cx="7.800" cy="7.800" r="6.500" />
          <path d="m12.500 12.500 5.500 5.500" />
        </Ic>
        <span className="ml-3">
          <Fit w={52}>Search</Fit>
        </span>
        <svg width="54" height="33" viewBox="0 0 54 33" className="ml-auto">
          <defs>
            <radialGradient id="fwL">
              <stop offset="0.300" stopColor="#6c7fd0" />
              <stop offset="1" stopColor="#8a83cf" stopOpacity="0" />
            </radialGradient>
            <radialGradient id="fwR">
              <stop offset="0.300" stopColor="#3fb8ae" />
              <stop offset="1" stopColor="#6fc7c2" stopOpacity="0" />
            </radialGradient>
          </defs>
          <ellipse cx="18" cy="15" rx="18" ry="16" fill="url(#fwL)" />
          <ellipse cx="36" cy="15" rx="18" ry="16" fill="url(#fwR)" />
          <path d="M14 20 20 14l6 7 12-8 7 9v4H14z" fill="#d6a24c" />
          <path d="M3 30 18 19l9 6 9-6 15 10q0 3-3 3H6q-3 0-3-2z" fill="#17306e" />
          <path d="M27 28 36 19l15 10q0 3-3 3H30z" fill="#2a1868" />
          <path d="M27 14V4M27 14l-7-7M27 14l8-7M27 14l-11-1M27 14l12-1" stroke="#f6e5a8" strokeDasharray="1.500 2.500" strokeWidth="1.600" />
        </svg>
      </div>
      <div className="ml-[3px] flex h-[60px]">
        {apps.map((a, i) => (
          <div key={i} className="relative flex w-[55px] items-center justify-center">
            {a.active && <div className="absolute inset-x-[3px] top-[5px] bottom-[7px] rounded-[5px] border border-[#dcd9e3] bg-[#edebf3]" />}
            <div className="relative">{a.el}</div>
            {a.dot && <i className="absolute bottom-[6px] h-1 w-2 rounded-full bg-[#7e7c84]" />}
            {a.active && <i className="absolute bottom-[6px] h-1 w-5 rounded-full bg-[#0078d4]" />}
          </div>
        ))}
      </div>
      <Ic w={14} h={9} sw={1.500} className="ml-[85px]">
        <path d="M1 8 7 1.500 13 8" />
      </Ic>
      <div className="ml-[26px] w-[30px] pb-[3px] text-center leading-5">
        <Fit w={28}>ENG</Fit>
        <Fit w={15}>IN</Fit>
      </div>
      <Ic w={20} h={16} sw={1.500} className="ml-[22px]">
        <path d="M1 6.200a13 13 0 0 1 18 0M3.800 9.200a9 9 0 0 1 12.400 0M6.500 12a5 5 0 0 1 7 0" />
        <circle cx="10" cy="14" r="1.200" fill="currentColor" />
      </Ic>
      <Ic w={20} h={18} sw={1.300} className="ml-[10px]">
        <path d="M1 6.500h3L9 2v14l-5-4.500H1zM11.500 6.500q1.500 2.500 0 5M14 4q3 5 0 10M16.500 2q4.500 7 0 14" />
      </Ic>
      <Ic w={21} h={18} sw={1.400} className="ml-[10px]">
        <path d="M8 4h8.500a2 2 0 0 1 2 2v7a2 2 0 0 1-2 2H4a2 2 0 0 1-2-2v-1M20 7.500v4" />
        <path d="M6 1 1.500 9h3.500L4 14l5-7.500H6z" fill="currentColor" />
        <path d="M9.500 7h3.500v5.500H7z" fill="currentColor" stroke="none" />
      </Ic>
      <div className="ml-auto w-[80px] pb-1 text-right leading-5">
        <Fit w={36.500}>14:36</Fit>
        <Fit w={78}>23-12-2024</Fit>
      </div>
      <svg width="16" height="18" viewBox="0 0 16 18" className="mr-[27px] ml-[11px]">
        <path d="M8 0a5.500 5.500 0 0 1 5.500 5.500V10l2.200 3.500H.3L2.500 10V5.500A5.500 5.500 0 0 1 8 0zM5.500 15h5a2.500 2.500 0 0 1-5 0z" fill="#0b4596" />
      </svg>
    </footer>
  );
}

export default function App() {
  return (
    <div className="flex h-[1200px] w-[1920px] flex-col overflow-hidden bg-white font-['Inter',sans-serif]">
      <Browser />
      <div className="flex h-[1032px] shrink-0 border-t border-[#f5dedb]">
        <LeftPanel />
        <Canvas />
        <RightPanel />
      </div>
      <Taskbar />
    </div>
  );
}
